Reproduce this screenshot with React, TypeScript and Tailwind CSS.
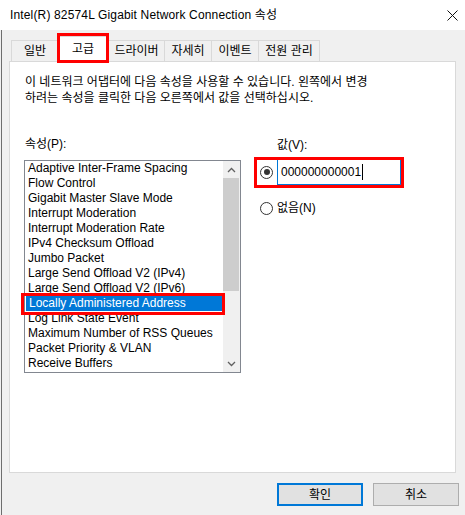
const properties = [
  "Adaptive Inter-Frame Spacing",
  "Flow Control",
  "Gigabit Master Slave Mode",
  "Interrupt Moderation",
  "Interrupt Moderation Rate",
  "IPv4 Checksum Offload",
  "Jumbo Packet",
  "Large Send Offload V2 (IPv4)",
  "Large Send Offload V2 (IPv6)",
  "Locally Administered Address",
  "Log Link State Event",
  "Maximum Number of RSS Queues",
  "Packet Priority & VLAN",
  "Receive Buffers",
];

const tabs = [
  { label: "일반", w: "w-[48px]" },
  { label: "고급", w: "w-[50px]", active: true },
  { label: "드라이버", w: "w-[57px]" },
  { label: "자세히", w: "w-[48px]" },
  { label: "이벤트", w: "w-[48px]" },
  { label: "전원 관리", w: "w-[62px]" },
];

const Radio = ({ checked }: { checked?: boolean }) => (
  <span className="w-[13px] h-[13px] rounded-full border border-[#333333] bg-white flex items-center justify-center shrink-0">
    {checked && <span className="w-[6px] h-[6px] rounded-full bg-[#333333]" />}
  </span>
);

const Chevron = ({ up }: { up?: boolean }) => (
  <svg width="9" height="6" viewBox="0 0 9 6">
    <polyline
      points={up ? "1,5 4.5,1.5 8,5" : "1,1 4.5,4.5 8,1"}
      fill="none"
      stroke="#606060"
      strokeWidth="1.3"
    />
  </svg>
);

export default function App() {
  const selected = 9;

  return (
    <div className="w-[465px] h-[515px] bg-[#f0f0f0] flex flex-col text-[12px] leading-[16px] text-black font-['Liberation_Sans','Noto_Sans_CJK_KR',sans-serif] overflow-hidden">
      <div className="h-[30px] bg-white flex items-center justify-between pl-[10px] pr-[7px] shrink-0">
        <span className="tracking-[0.15px]">Intel(R) 82574L Gigabit Network Connection 속성</span>
        <svg width="11" height="11" viewBox="0 0 11 11">
          <path d="M0.5 0.5 L10.5 10.5 M10.5 0.5 L0.5 10.5" stroke="#111" strokeWidth="1" />
        </svg>
      </div>

      <div className="flex-1 ml-px border-l border-[#6e6e6e] flex flex-col">
        {/* tabs */}
        <div className="relative flex items-end ml-[9px] mt-[6px] h-[25px] z-10">
          {tabs.map((t) =>
            t.active ? (
              <div
                key={t.label}
                className={`${t.w} h-[26px] -mb-px bg-white border-t border-l border-r border-[#d9d9d9] flex items-center justify-center pb-[2px]`}
              >
                {t.label}
              </div>
            ) : (
              <div
                key={t.label}
                className={`${t.w} h-[21px] border-t border-l border-r border-[#d9d9d9] -mr-px flex items-center justify-center`}
              >
                {t.label}
              </div>
            )
          )}
          <div className="absolute left-[46px] top-[-3px] w-[52px] h-[30px] border-[3px] border-[#ff0000]" />
        </div>

        {/* panel */}
        <div className="ml-[7px] w-[447px] h-[412px] bg-white border border-[#d9d9d9] pl-[14px] pt-[12px]">
          <p className="ml-[1px]">
            이 네트워크 어댑터에 다음 속성을 사용할 수 있습니다. 왼쪽에서 변경
            <br />
            하려는 속성을 클릭한 다음 오른쪽에서 값을 선택하십시오.
          </p>

          <div className="flex mt-[30px] gap-[16px]">
            <div className="flex flex-col w-[217px]">
              <span className="ml-[1px] mb-[8px]">속성(P):</span>
              <div className="relative h-[213px] border border-[#828790] flex">
                <div className="flex-1 flex flex-col">
                  {properties.map((p, i) => (
                    <div
                      key={p}
                      className={`h-[15px] leading-[15px] pl-[3px] whitespace-nowrap ${
                        i === selected ? "bg-[#0078d7] text-white mx-px pl-[2px]" : ""
                      }`}
                    >
                      {p}
                    </div>
                  ))}
                </div>
                <div className="w-[17px] bg-[#f0f0f0] flex flex-col">
                  <div className="h-[17px] flex items-center justify-center">
                    <Chevron up />
                  </div>
                  <div className="h-[113px] bg-[#cdcdcd] mr-px" />
                  <div className="flex-1" />
                  <div className="h-[17px] flex items-center justify-center">
                    <Chevron />
                  </div>
                </div>
                <div className="absolute left-[-4px] top-[132px] w-[204px] h-[22px] border-[3px] border-[#ff0000]" />
              </div>
            </div>

            <div className="flex flex-col pt-[1px]">
              <span className="ml-[20px]">값(V):</span>
              <div className="relative flex items-center mt-[6px] h-[26px]">
                <span className="ml-[3px] mr-[4px]">
                  <Radio checked />
                </span>
                <div className="w-[124px] h-[26px] border border-[#0078d7] flex items-center pl-[3px]">
                  000000000001
                  <span className="w-px h-[16px] bg-black ml-[1px]" />
                </div>
                <div className="absolute left-[-3px] top-[-2px] w-[150px] h-[31px] border-[3px] border-[#ff0000]" />
              </div>
              <div className="flex items-center mt-[15px]">
                <span className="ml-[3px] mr-[4px]">
                  <Radio />
                </span>
                <span>없음(N)</span>
              </div>
            </div>
          </div>
        </div>

        {/* buttons */}
        <div className="flex justify-end gap-[10px] mt-[10px] pr-[6px]">
          <button className="w-[86px] h-[23px] bg-[#e1e1e1] border-2 border-[#0078d7]">확인</button>
          <button className="w-[86px] h-[23px] bg-[#e1e1e1] border border-[#adadad]">취소</button>
        </div>
      </div>
    </div>
  );
}
